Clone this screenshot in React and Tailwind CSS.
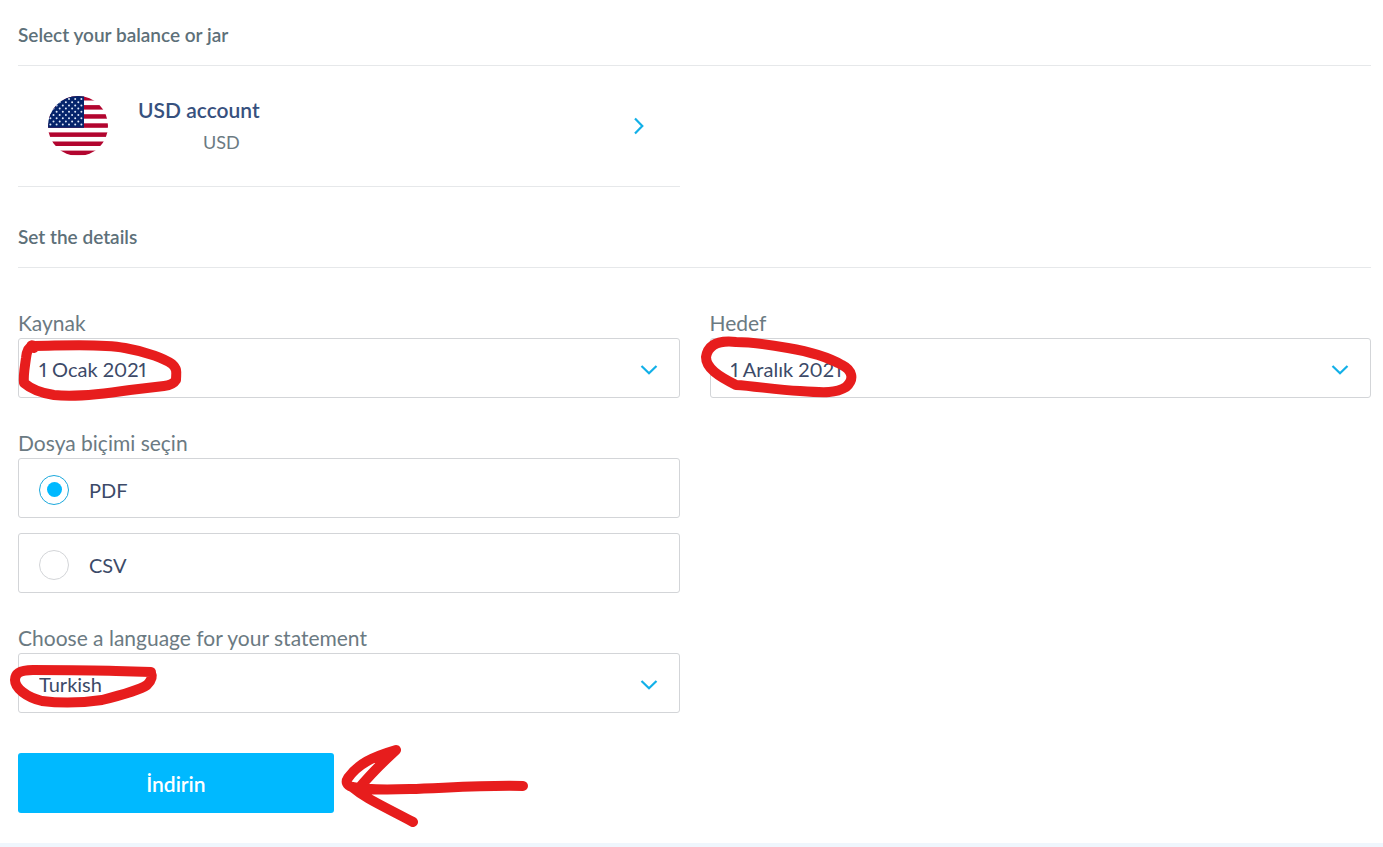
import React, { useState } from "react";

const stripes = [0, 1, 2, 3, 4, 5, 6];

const starRows = [0, 1, 2, 3, 4, 5, 6, 7, 8];

const UsFlag = () => (
  <svg viewBox="0 0 60 60" className="size-[60px] shrink-0" aria-hidden="true">
    <clipPath id="flag-circle">
      <circle cx="30" cy="30" r="30" />
    </clipPath>
    <g clipPath="url(#flag-circle)">
      <rect width="60" height="60" fill="#fff" />
      {stripes.map((i) => (
        <rect key={i} y={i * 9.1} width="60" height="4.5" fill="#b2052f" />
      ))}
      <rect width="36" height="31.8" fill="#05246b" />
      {starRows.map((row) =>
        [0, 1, 2, 3, 4, 5].map((col) => (
          <circle
            key={`${row}-${col}`}
            cx={2.4 + col * 6.2 + (row % 2) * 3.1}
            cy={3 + row * 3.2}
            r={col === 5 && row % 2 ? 0 : 1}
            fill="#dfe8f8"
          />
        ))
      )}
    </g>
  </svg>
);

const ChevronDown = () => (
  <svg
    viewBox="0 0 18 12"
    className="pointer-events-none absolute right-[22px] top-[26px] h-3 w-[18px]"
    fill="none"
    stroke="#12b0e8"
    strokeWidth="2.2"
    aria-hidden="true"
  >
    <path d="M1.5 2 9 9.300 16.500 2" />
  </svg>
);

const Marker = ({ d, className, viewBox }) => (
  <svg
    viewBox={viewBox}
    className={`pointer-events-none absolute ${className}`}
    fill="none"
    stroke="#e71d1d"
    strokeWidth="10"
    strokeLinecap="round"
    strokeLinejoin="round"
    aria-hidden="true"
  >
    <path d={d} />
  </svg>
);

const SelectField = ({ id, label, options, children }) => (
  <div>
    <label htmlFor={id} className="mb-1 block text-[21px] leading-[23px] text-[#6b7a82]">
      {label}
    </label>
    <div className="relative">
      <select
        id={id}
        className="block h-[60px] w-full appearance-none rounded-[3px] border border-[#d3d5d8] bg-white pb-0 pl-5 pr-12 pt-0.5 text-xl proportional-nums text-[#3c4a68] focus:border-[#00b9ff] focus:outline-none"
      >
        {options.map((option) => (
          <option key={option}>{option}</option>
        ))}
      </select>
      <ChevronDown />
      {children}
    </div>
  </div>
);

const RadioOption = ({ value, selected, onSelect }) => (
  <label className="flex h-[60px] cursor-pointer items-center gap-5 rounded-[3px] border border-[#d3d5d8] px-5 pt-[3px] text-xl text-[#3c4a68]">
    <input
      type="radio"
      name="format"
      value={value}
      checked={selected}
      onChange={() => onSelect(value)}
      className="grid size-[30px] appearance-none place-items-center rounded-full border border-[#d3d5d8] before:size-[15px] before:rounded-full checked:border-[#1ba8dc] checked:before:bg-[#00b9ff]"
    />
    {value}
  </label>
);

const SectionTitle = ({ children }) => (
  <h2 className="border-b border-[#e6e8ea] pb-[18px] text-[19px] font-semibold leading-6 text-[#5d7079]">
    {children}
  </h2>
);

const App = () => {
  const [format, setFormat] = useState("PDF");

  return (
    <div className="overflow-x-hidden bg-white font-['Lato','Liberation_Sans',sans-serif]">
      <main className="pb-[30px] pl-[18px] pr-3 pt-[23px]">
        <SectionTitle>Select your balance or jar</SectionTitle>
        <div className="grid grid-cols-2 gap-[30px]">
          <button
            type="button"
            className="flex h-[121px] items-center border-b border-[#e6e8ea] pl-[30px] pr-[35px] text-left"
          >
            <UsFlag />
            <span className="ml-[30px] flex-1">
              <span className="block text-[21px] font-semibold leading-8 text-[#37517e]">
                USD account
              </span>
              <span className="block pl-[65px] text-lg leading-8 text-[#6b7a82]">
                USD
              </span>
            </span>
            <svg
              viewBox="0 0 12 18"
              className="h-[18px] w-3"
              fill="none"
              stroke="#12b0e8"
              strokeWidth="2.2"
              aria-hidden="true"
            >
              <path d="M2 1.500 9.300 9 2 16.500" />
            </svg>
          </button>
        </div>

        <div className="pt-[38px]">
          <SectionTitle>Set the details</SectionTitle>
        </div>

        <form className="pt-[43px]" onSubmit={(e) => e.preventDefault()}>
          <div className="grid grid-cols-2 gap-x-[30px] gap-y-[33px]">
            <SelectField id="from" label="Kaynak" options={["1 Ocak 2021"]}>
              <Marker
                viewBox="0 0 180 80"
                className="-left-2 -top-2 h-20 w-[180px]"
                d="M24 18 Q19 14 24 16 C48 16 88 13 115 18 C138 22 155 29 162 34 C168 39 166 44 166 50 Q163 55 154 56 L120 60 C94 64 62 67 44 65 C30 63 21 59 14 53 C13 45 15 36 16 28 Q17 18 22 16"
              />
            </SelectField>
            <SelectField id="to" label="Hedef" options={["1 Aralık 2021"]}>
              <Marker
                viewBox="0 0 180 80"
                className="-left-4 -top-2 h-20 w-[180px]"
                d="M42 12 C24 10 14 15 12 27 C12 38 24 46 42 55 C61 56 82 60 106 61 C132 63 142 63 152 57 C161 49 158 40 148 35 C132 26 112 21 94 18 C71 14 55 12 42 12Z"
              />
            </SelectField>

            <fieldset className="col-start-1">
              <legend className="mb-1 text-[21px] leading-[23px] text-[#6b7a82]">
                Dosya biçimi seçin
              </legend>
              <div className="space-y-[15px]">
                <RadioOption value="PDF" selected={format === "PDF"} onSelect={setFormat} />
                <RadioOption value="CSV" selected={format === "CSV"} onSelect={setFormat} />
              </div>
            </fieldset>

            <div className="col-start-1">
              <SelectField
                id="language"
                label="Choose a language for your statement"
                options={["Turkish"]}
              >
                <Marker
                  viewBox="0 0 160 60"
                  className="-left-3 top-1 h-[60px] w-40"
                  d="M145 15 L110 14 C85 13 52 13 27 13 C14 13 9 16 9 23 C9 31 20 40 36 44 C52 46 75 46 96 43 C116 38 135 32 141 28 C145 24 147 20 145 16"
                />
              </SelectField>
            </div>
          </div>

          <div className="mt-10 grid grid-cols-4 gap-[30px]">
            <div className="relative">
              <button
                type="submit"
                className="block h-[60px] w-full rounded-[3px] bg-[#00b9ff] pt-0.5 text-[21px] font-semibold text-white"
              >
                İndirin
              </button>
              <Marker
                viewBox="0 0 200 90"
                className="-top-3 left-full h-[90px] w-[200px]"
                d="M189 45 C149 44 111 47 76 48 C49 49 32 49 18 46 Q10 43 14 37 C24 23 38 16 62 9 C49 21 36 34 26 46 M18 46 C31 57 45 63 79 81"
              />
            </div>
          </div>
        </form>
      </main>
      <div className="h-1 bg-[#eff6fd]" />
    </div>
  );
};

export default App;
